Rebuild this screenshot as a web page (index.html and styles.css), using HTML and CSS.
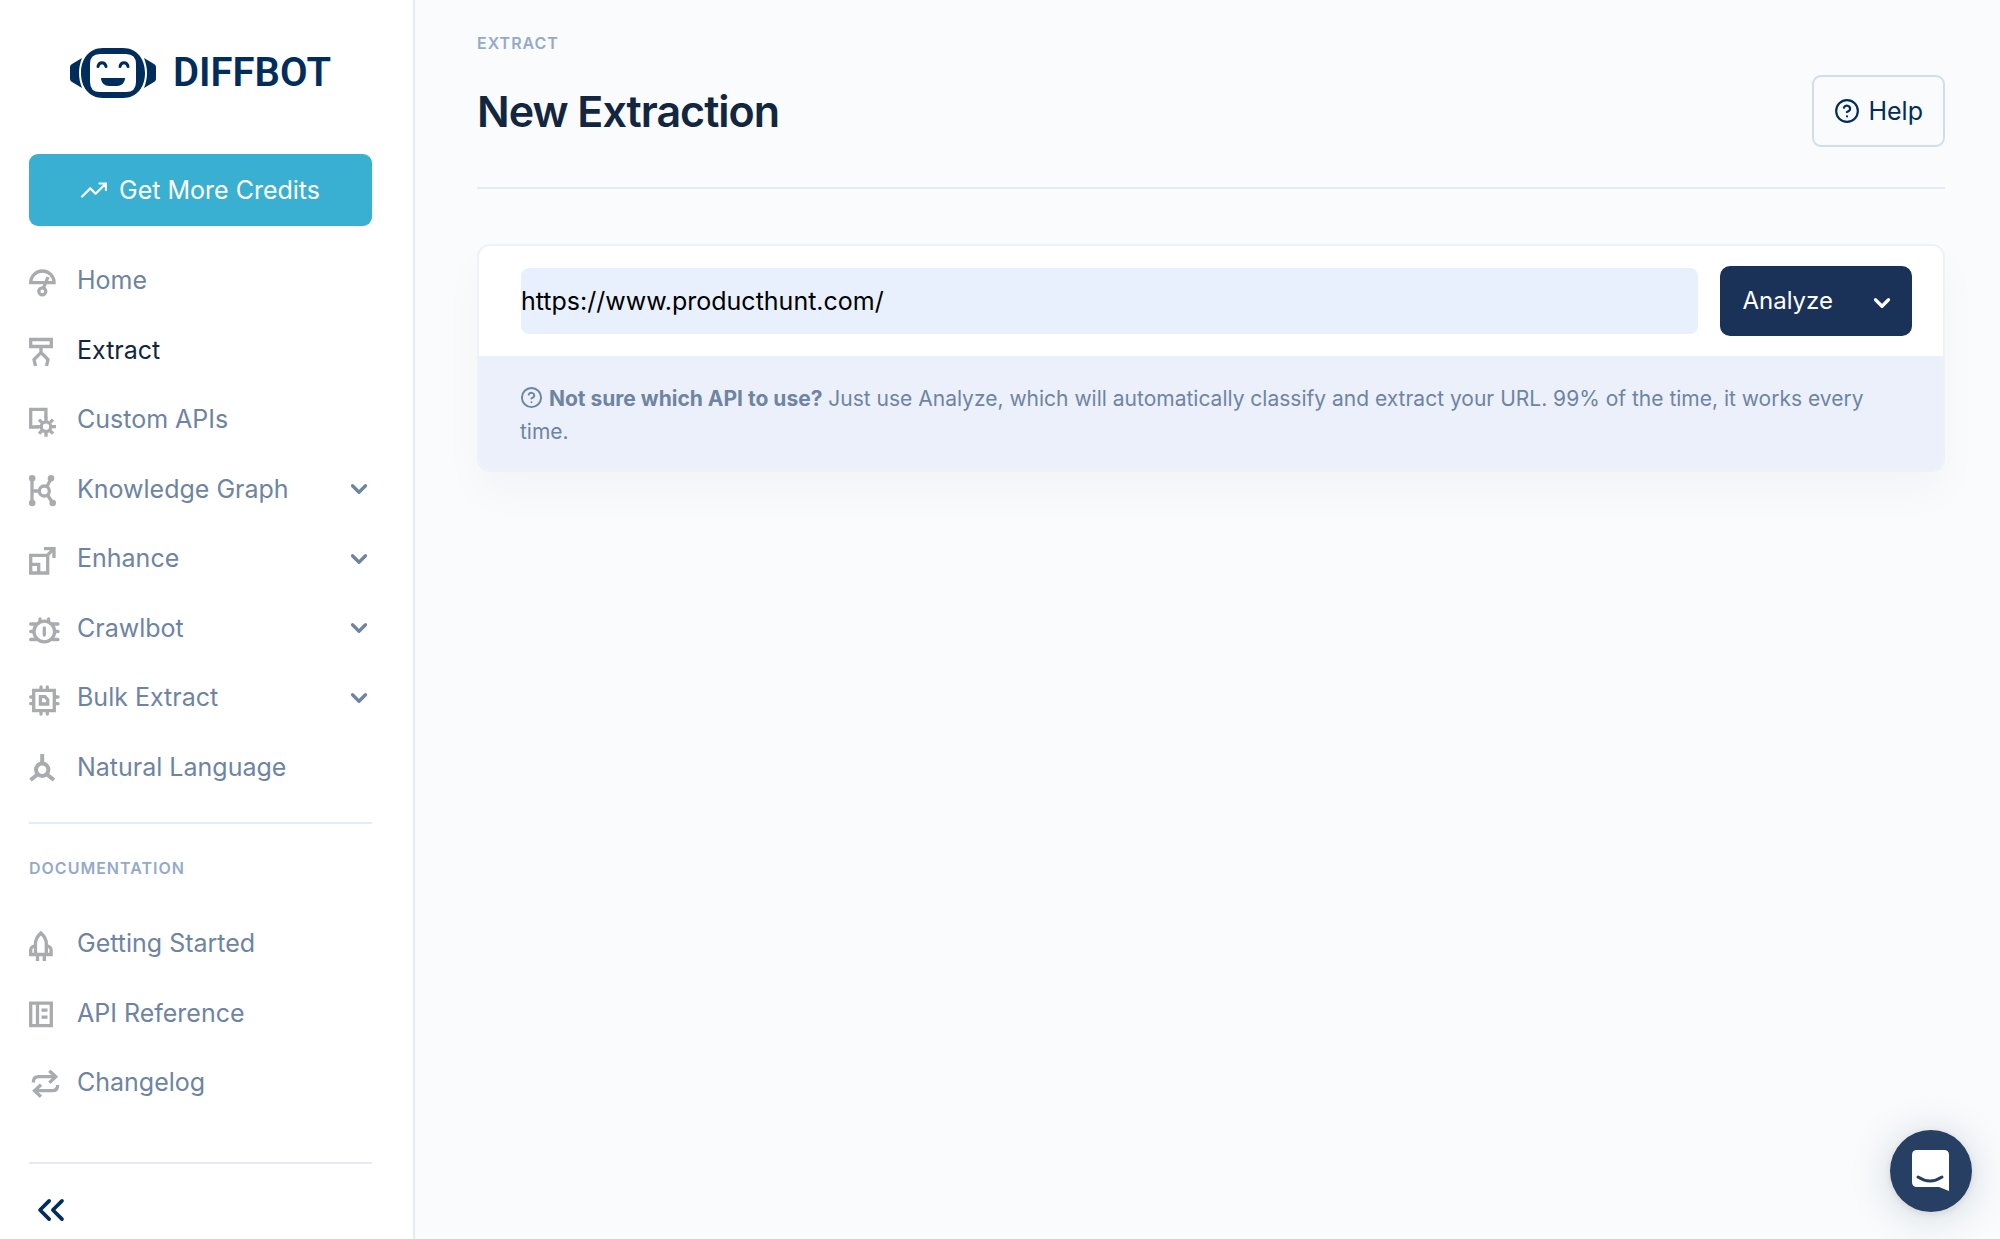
FILE: index.html
```html
<!DOCTYPE html>
<html lang="en">
<head>
  <meta charset="UTF-8">
  <meta name="viewport" content="width=device-width, initial-scale=1">
  <title>New Extraction - Diffbot</title>
  <link rel="stylesheet" href="styles.css">
</head>
<body>

<svg class="sprite" aria-hidden="true">
  <symbol id="chevron" viewBox="0 0 24 24"><path d="M6 9l6 6 6-6"/></symbol>
  <symbol id="help" viewBox="0 0 24 24">
    <circle cx="12" cy="12" r="10"/>
    <path d="M9.1 9a3 3 0 0 1 5.8 1c0 2-3 3-3 3M12 17h.01"/>
  </symbol>
</svg>

<div class="layout">

  <!-- Sidebar -->
  <aside class="sidebar">
    <a class="logo" href="#">
      <svg class="logo-face" viewBox="0 0 86 52" aria-hidden="true">
        <path d="M12 11C8 21 8 31 12 41L2 35Q0 34 0 32V20Q0 18 2 17ZM74 11C78 21 78 31 74 41L84 35Q86 34 86 32V20Q86 18 84 17Z"/>
        <path fill-rule="evenodd" d="M33 1H53C67 1 75 12 75 26S67 51 53 51H33C19 51 11 40 11 26S19 1 33 1ZM30 7Q20 7 20 17V35Q20 45 30 45H56Q66 45 66 35V17Q66 7 56 7Z"/>
        <path d="M31 31H55C55 36 51 39 47 39H39C35 39 31 36 31 31Z"/>
        <path class="logo-eyes" d="M28 19.500C29 14.500 35 14.500 36 19.500M50 19.500C51 14.500 57 14.500 58 19.500"/>
      </svg>
      <span>DIFFBOT</span>
    </a>

    <a class="btn btn-credits" href="#">
      <svg class="line-icon" viewBox="0 0 24 24" aria-hidden="true"><path d="M23 6l-9.500 9.500-5-5L1 18M17 6h6v6"/></svg>
      Get More Credits
    </a>

    <nav class="nav">
      <a href="#">
        <svg class="nav-icon" viewBox="0 0 32 32" aria-hidden="true"><path d="M1.700 17.700a11.700 11.700 0 0 1 23.400 0zM14.500 23L19 12"/><circle cx="13.300" cy="26.300" r="3.500"/></svg>
        Home
      </a>
      <a class="active" href="#">
        <svg class="nav-icon" viewBox="0 0 32 32" aria-hidden="true"><path d="M1.700 5.500h20.600v7H1.700zM12 13v6M6.500 32L5 25.500l7-7 7 7L17.500 32"/></svg>
        Extract
      </a>
      <a href="#">
        <svg class="nav-icon" viewBox="0 0 32 32" aria-hidden="true"><path d="M10 23H1.700V5.400h15.200V14"/><circle cx="17" cy="22.700" r="4.800"/><path d="M17 12.700v4M17 28.700v4M7 22.700h4M23 22.700h4M10 15.700l2.700 2.700M21.300 27l2.700 2.700M24 15.700l-2.700 2.700M12.700 27L10 29.700"/></svg>
        Custom APIs
      </a>
      <a href="#">
        <svg class="nav-icon" viewBox="0 0 32 32" aria-hidden="true"><path d="M3 5v25M3 18h7M18 13.500L22 5.500M18.500 22L23.700 30"/><circle cx="15.300" cy="18" r="5"/><g class="dots"><circle cx="3.200" cy="5.300" r="3.300"/><circle cx="3.200" cy="30" r="3.300"/><circle cx="22" cy="5.300" r="3.300"/><circle cx="23.700" cy="30" r="3.300"/></g></svg>
        Knowledge Graph
        <svg class="chevron"><use href="#chevron"/></svg>
      </a>
      <a href="#">
        <svg class="nav-icon" viewBox="0 0 32 32" aria-hidden="true"><path d="M1.700 12.400h17v17.600h-17zM1.700 21.400h8V30M15 5.700h10V15M25 5.700l-7 7"/></svg>
        Enhance
        <svg class="chevron"><use href="#chevron"/></svg>
      </a>
      <a href="#">
        <svg class="nav-icon round" viewBox="0 0 32 32" aria-hidden="true"><circle cx="15.300" cy="19.500" r="10.300"/><path d="M15.300 16v7M11 9V7M19.600 9V7M1.700 12H7M23.600 12H29M1.700 19.500H4M26.600 19.500H29M1.700 27.500H7M23.600 27.500H29"/></svg>
        Crawlbot
        <svg class="chevron"><use href="#chevron"/></svg>
      </a>
      <a href="#">
        <svg class="nav-icon round" viewBox="0 0 32 32" aria-hidden="true"><path d="M4.700 8.300h20.600v20.400H4.700zM11.400 14.700H16l2.700 3v4.300h-7.300zM12 5v3M18.300 5v3M12 29v3M18.300 29v3M1.700 15H4M1.700 21.700H4M26 15h3M26 21.700h3"/></svg>
        Bulk Extract
        <svg class="chevron"><use href="#chevron"/></svg>
      </a>
      <a href="#">
        <svg class="nav-icon thick" viewBox="0 0 32 32" aria-hidden="true"><circle cx="13.200" cy="18.700" r="6.200"/><path d="M13.200 3v9M8.500 23.500L1.500 29M18 23.500l7 5.500"/></svg>
        Natural Language
      </a>
    </nav>

    <hr>

    <h2 class="nav-heading">Documentation</h2>
    <nav class="nav">
      <a href="#">
        <svg class="nav-icon" viewBox="0 0 32 32" aria-hidden="true"><path d="M6.500 26.500V15c0-4 2.300-7 5.400-10 3.100 3 5.400 6 5.400 10v11.500M6.500 17.500c-3 .8-4.800 2.300-4.800 4.500v4.500h20.400V22c0-2.200-1.800-3.700-4.800-4.500M8.500 27v6M15.300 27v6"/></svg>
        Getting Started
      </a>
      <a href="#">
        <svg class="nav-icon" viewBox="0 0 32 32" aria-hidden="true"><path d="M1.700 6.200h20.600v22.400H1.700zM8.500 6v22M12.500 13.200h6M12.500 20.200h6"/></svg>
        API Reference
      </a>
      <a href="#">
        <svg class="nav-icon" viewBox="0 0 32 32" aria-hidden="true"><path d="M4.300 15.500c0-4 2-5.800 5.500-5.800H27M20.300 3.700l6.500 6-6.500 6M28.700 18c0 4-2 5.700-5.500 5.700H6M12 17.700l-6.500 6 6.500 6"/></svg>
        Changelog
      </a>
    </nav>

    <hr class="last">

    <button class="collapse" type="button" aria-label="Collapse sidebar">
      <svg class="line-icon" viewBox="0 0 24 24"><path d="M11 17l-5-5 5-5M18 17l-5-5 5-5"/></svg>
    </button>
  </aside>

  <!-- Content -->
  <main class="content">
    <header class="header">
      <p class="pretitle">Extract</p>
      <div class="header-row">
        <h1>New Extraction</h1>
        <a class="btn btn-help" href="#"><svg class="line-icon"><use href="#help"/></svg>Help</a>
      </div>
    </header>

    <form class="card">
      <div class="card-row">
        <input class="url" type="text" value="https://www.producthunt.com/" aria-label="URL to extract">
        <div class="btn-group">
          <button class="analyze" type="button">Analyze</button>
          <button class="toggle" type="button" aria-label="Choose API"><svg class="chevron"><use href="#chevron"/></svg></button>
        </div>
      </div>
      <p class="hint">
        <svg class="line-icon"><use href="#help"/></svg>
        <strong>Not sure which API to use?</strong> Just use Analyze, which will automatically classify and extract your URL. 99% of the time, it works every time.
      </p>
    </form>
  </main>

</div>

<button class="messenger" type="button" aria-label="Open chat">
  <svg viewBox="0 0 38 42">
    <path class="bubble" d="M5 0H32Q37 0 37 5V41L27 37H5Q0 37 0 32V5Q0 0 5 0Z"/>
    <path class="smile" d="M6 27Q18 35 30 27"/>
  </svg>
</button>

</body>
</html>
```
FILE: styles.css
```css
* { box-sizing: border-box; }
body {
  margin: 0;
  font-family: Inter, "Liberation Sans", sans-serif;
  font-size: 25px;
  line-height: 36px;
  color: #12263f;
  background-color: #f9fbfd;
}
a {
  color: inherit;
  text-decoration: none;
}
button {
  font: inherit;
  color: inherit;
  padding: 0;
  border: none;
  background: none;
  cursor: pointer;
}
hr {
  width: 100%;
  margin: 20px 0 31px;
  border: none;
  border-top: 2px solid #e3ebf6;
}
.sprite {
  display: none;
}
.layout {
  display: flex;
  min-height: 100vh;
}

/* icons */
.line-icon, .chevron {
  width: 26px;
  height: 26px;
  fill: none;
  stroke: currentColor;
  stroke-width: 2;
  stroke-linecap: round;
  stroke-linejoin: round;
}
.nav-icon {
  width: 32px;
  height: 32px;
  overflow: visible;
  fill: none;
  stroke: #a9abae;
  stroke-width: 3.3;
}
.nav-icon.round {
  stroke-linecap: round;
}
.nav-icon.thick {
  stroke-width: 4;
}
.nav-icon .dots {
  fill: #a9abae;
  stroke: none;
}

/* sidebar */
.sidebar {
  flex: none;
  width: 415px;
  padding: 47px 41px 0 29px;
  background-color: white;
  border-right: 2px solid #e3ebf6;
}
.logo {
  display: flex;
  align-items: center;
  justify-content: center;
  gap: 17px;
  height: 52px;
  margin-bottom: 55px;
  font-family: Roboto, sans-serif;
  font-size: 40px;
  font-weight: 600;
  color: #002d5c;
}
.logo-face {
  width: 86px;
  height: 52px;
  fill: #002d5c;
}
.logo-eyes {
  fill: none;
  stroke: #002d5c;
  stroke-width: 3;
  stroke-linecap: round;
}
.btn {
  display: flex;
  align-items: center;
  justify-content: center;
  height: 72px;
  border-radius: 9px;
}
.btn-credits {
  gap: 12px;
  margin-bottom: 20px;
  color: white;
  background-color: #39afd1;
}
.nav a {
  display: flex;
  align-items: center;
  gap: 16px;
  padding: 16px 0;
  line-height: 1.5;
  color: #6e84a3;
}
.nav a.active {
  color: #12263f;
}
.nav .chevron {
  margin-left: auto;
  stroke-width: 3;
}
.nav-heading, .pretitle {
  margin: 0 0 28px;
  font-size: 16px;
  font-weight: 600;
  line-height: 26px;
  letter-spacing: 1px;
  text-transform: uppercase;
  color: #95aac9;
}
hr.last {
  margin: 44px 0 24px;
}
.collapse {
  display: block;
  color: #002d5c;
}
.collapse .line-icon {
  display: block;
  width: 44px;
  height: 44px;
}

/* content */
.content {
  flex: 1;
  min-width: 0;
  padding: 30px 55px 40px 62px;
}
.header {
  padding-bottom: 40px;
  border-bottom: 2px solid #e3ebf6;
}
.pretitle {
  margin-bottom: 19px;
}
.header-row {
  display: flex;
  align-items: center;
  justify-content: space-between;
}
h1 {
  margin: 0;
  font-size: 43px;
  font-weight: 600;
  line-height: 56px;
  letter-spacing: -1px;
}
.btn-help {
  gap: 8px;
  padding: 0 20px;
  color: #002d5c;
  border: 2px solid #d2ddec;
}
.card {
  margin-top: 55px;
  overflow: hidden;
  background-color: white;
  border: 2px solid #edf2f9;
  border-radius: 13px;
  box-shadow: 0 20px 40px rgba(18, 38, 63, 0.03);
}
.card-row {
  display: flex;
  align-items: center;
  gap: 22px;
  padding: 20px 31px 20px 42px;
}
.url {
  flex: 1;
  min-width: 0;
  height: 66px;
  padding: 0;
  font: inherit;
  color: black;
  background-color: #e8f0fe;
  border: none;
  border-radius: 8px;
}
.btn-group {
  display: flex;
  height: 70px;
  color: white;
  background-color: #1a3158;
  border-radius: 10px;
}
.analyze {
  padding: 0 14px 0 22px;
  font-size: 24px;
}
.toggle {
  padding: 4px 17px 0 22px;
}
.toggle .chevron {
  display: block;
  stroke-width: 3;
}
.hint {
  margin: 0;
  padding: 26px 42px 22px 41px;
  font-size: 21px;
  line-height: 33px;
  color: #6e84a3;
  background-color: #ecf0fa;
}
.hint .line-icon {
  width: 23px;
  height: 23px;
  vertical-align: -3px;
}
.hint strong {
  font-weight: 700;
}

.messenger {
  position: fixed;
  right: 28px;
  bottom: 27px;
  display: flex;
  align-items: center;
  justify-content: center;
  width: 82px;
  height: 82px;
  background-color: #263f63;
  border-radius: 50%;
  box-shadow: 0 2px 8px rgba(18, 38, 63, 0.1), 0 4px 44px rgba(18, 38, 63, 0.16);
}
.messenger svg {
  width: 38px;
  height: 42px;
}
.bubble {
  fill: white;
}
.smile {
  fill: none;
  stroke: #263f63;
  stroke-width: 3;
  stroke-linecap: round;
}
```
